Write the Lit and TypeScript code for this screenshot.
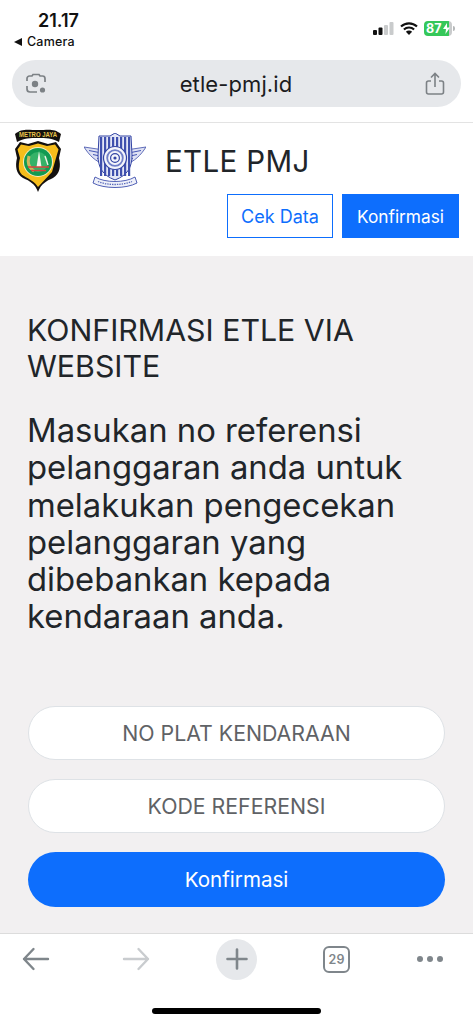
import { LitElement, html, css, svg } from "lit";
import { customElement } from "lit/decorators.js";

const polri = svg`<svg class="polri" viewBox="0 0 48 65" width="48" height="65" aria-hidden="true">
  <path d="M1 6 C 8 0, 14 2, 24 2 C 34 2, 40 0, 47 6 L 45 14 C 38 10, 32 10, 24 10 C 16 10, 10 10, 3 14 Z" fill="#14110f"/>
  <text x="24" y="8.6" text-anchor="middle" font-family="Liberation Sans, sans-serif" font-size="6.6" font-weight="700" fill="#e8c24a" textLength="38" lengthAdjust="spacingAndGlyphs">METRO JAYA</text>
  <path d="M24 13 L34 16 L42 14 L47 21 L45 30 C 47 38, 46 46, 39 50 C 32 53, 27 56, 24 64 C 21 56, 16 53, 9 50 C 2 46, 1 38, 3 30 L1 21 L6 14 L14 16 Z" fill="#14110f"/>
  <path d="M24 15.5 L33 18 L41 16.5 L44.5 21.5 L42 30 L38 44 L24 59 C 21 54, 15 51, 10 48 C 4 45, 4 38, 6 30 L3.5 21.5 L7 16.5 L15 18 Z" fill="#f6bd1b"/>
  <circle cx="24" cy="34" r="15" fill="#f5ecc4"/>
  <circle cx="24" cy="34" r="14" fill="#129a52"/>
  <circle cx="24" cy="34" r="10" fill="#35b268"/>
  <path d="M15 28 C 13 35, 15 40, 20 43" fill="none" stroke="#c9b95e" stroke-width="3"/>
  <path d="M25 23 L27.5 39 L22.5 39 Z" fill="#f7f5ee"/>
  <path d="M14 39 L35 39 M17 42.5 L32 42.5" stroke="#d8433c" stroke-width="1.7"/>
  <path d="M31 28 L34 37" stroke="#f5f3ec" stroke-width="1.3"/>
</svg>`;

const bars = [15, 19, 23, 27, 31, 35, 39, 43];
const lantas = svg`<svg class="lantas" viewBox="0 0 62 58" width="62" height="58" aria-hidden="true">
  <path d="M0 14 L20 17 L20 31 C 12 29, 5 22, 0 14 Z M62 14 L42 17 L42 31 C 50 29, 57 22, 62 14 Z" fill="#dfe2f4" stroke="#3b4ba8" stroke-width=".8"/>
  <path d="M5 17.5 L20 20.5 M9 21.5 L20 24 M13 25.5 L20 27.5 M57 17.5 L42 20.5 M53 21.5 L42 24 M49 25.5 L42 27.5" stroke="#4556b4" stroke-width="1"/>
  <path d="M31 0 L36 3 L47 3 L48 22 C 48 34, 44 42, 31 47 C 18 42, 14 34, 14 22 L15 3 L26 3 Z" fill="#e4e7f7" stroke="#3344a4" stroke-width="1"/>
  ${bars.map((x) => svg`<rect x="${x + 1}" y="4" width="2.2" height="39" fill="#3f50ae"/>`)}
  <circle cx="31" cy="25" r="11.5" fill="#f4f5fb" stroke="#3344a4" stroke-width="1.2"/>
  <circle cx="31" cy="25" r="7.8" fill="none" stroke="#6f7ec8" stroke-width="1.8"/>
  <circle cx="31" cy="25" r="4.4" fill="none" stroke="#3344a4" stroke-width="1.2"/>
  <circle cx="31" cy="25" r="1.6" fill="#3344a4"/>
  <path d="M11 44 C 21 50, 41 50, 51 44 L53 50 C 42 56, 20 56, 9 50 Z" fill="#eef0f9" stroke="#3f50ae" stroke-width=".9"/>
  <path d="M14 48.5 C 24 52.5, 38 52.5, 48 48.5" fill="none" stroke="#5a6abb" stroke-width="1.3" stroke-dasharray="1.4 1"/>
</svg>`;

@customElement("app-root")
export class AppRoot extends LitElement {
  static styles = css`
    :host { display: block; width: 473px; height: 1023px; background: #fff; overflow: hidden;
      font-family: Inter, "Liberation Sans", sans-serif; color: #212529; }
    .page { height: 1023px; display: flex; flex-direction: column; }
    .status { height: 60px; flex: none; display: flex; justify-content: space-between; padding: 0 18px 0 14px; box-sizing: border-box; }
    .left { display: flex; flex-direction: column; }
    .time { margin: 11px 0 0 24px; font-size: 18px; line-height: 20px; font-weight: 600; color: #111; }
    .back { margin-top: 3px; font-size: 12.5px; line-height: 16px; color: #111; display: flex; align-items: center; gap: 5px; font-weight: 500; letter-spacing: .2px; }
    .back i { width: 0; height: 0; border-style: solid; border-width: 4px 8px 4px 0; border-color: transparent #111 transparent transparent; }
    .indicators { display: flex; align-items: center; height: 18px; margin-top: 19px; gap: 6px; }
    .battery { width: 28px; height: 15px; border-radius: 4px; background: linear-gradient(90deg, #35c759 0 90%, #c9cbcc 90%); color: #fff; font-size: 12.5px; font-weight: 700; line-height: 15px; padding-left: 2px; box-sizing: border-box; white-space: nowrap; overflow: hidden; position: relative; }
    .bolt { position: absolute; right: 2px; top: 2px; }
    .nub { width: 2px; height: 5px; background: #b5b8b9; border-radius: 0 2px 2px 0; margin-left: -5px; }
    .urlbar { flex: none; height: 47px; margin: 0 12px; background: #e6e8eb; border-radius: 24px; display: flex; align-items: center; justify-content: space-between; padding: 0 16px 0 13px; }
    .url { font-size: 22px; color: #1b1c1e; letter-spacing: .1px; }
    .urlbar svg { display: block; }
    header { flex: none; margin-top: 15px; height: 134px; box-sizing: border-box; border-top: 1px solid #e3e3e3; display: flex; flex-direction: column; }
    .brand { display: flex; align-items: flex-start; height: 71px; }
    .polri { margin: 5px 0 0 14px; display: block; }
    .lantas { margin: 10px 0 0 22px; display: block; }
    .brand h1 { margin: 20px 0 0 19px; font-size: 29.5px; line-height: 36px; font-weight: 400; color: #212529; letter-spacing: .35px; }
    .actions { display: flex; justify-content: flex-end; gap: 9px; padding-right: 14px; }
    .btn { height: 44px; box-sizing: border-box; display: flex; align-items: center; justify-content: center; border: 1px solid #0d6efd; }
    .outline { width: 106px; color: #0d6efd; background: #fff; font-size: 18px; }
    .solid { width: 117px; color: #fff; background: #0d6efd; font-size: 17.3px; }
    main { flex: 1; background: #f2f0f1; padding: 56px 28px 0; display: flex; flex-direction: column; min-height: 0; }
    h2 { margin: 0 0 0 -1px; font-size: 30.3px; line-height: 36px; font-weight: 400; color: #212529; }
    .lead { margin: 28px 0 0 -1px; font-size: 32.8px; line-height: 37.3px; font-weight: 400; color: #212529; }
    .form { margin-top: 70px; display: flex; flex-direction: column; gap: 19px; }
    .field { height: 54px; box-sizing: border-box; border-radius: 27px; background: #fff; border: 1px solid #dee2e6; display: flex; align-items: center; justify-content: center; font-size: 21.3px; color: #5f6266; }
    .submit { height: 55px; border-radius: 28px; background: #0d6efd; color: #fff; display: flex; align-items: center; justify-content: center; font-size: 20.6px; }
    .toolbar { flex: none; height: 90px; border-top: 1px solid #dcdcdc; box-sizing: border-box; display: flex; flex-direction: column; align-items: center; }
    .tools { width: 100%; box-sizing: border-box; padding-left: 22px; display: flex; gap: 66px; align-items: center; height: 50px; }
    .back-arrow { margin-right: 6px; }
    .plus { width: 41px; height: 41px; border-radius: 50%; background: #e6e8eb; display: flex; align-items: center; justify-content: center; }
    .tabs { width: 27px; height: 27px; box-sizing: border-box; border: 2px solid #7f868b; border-radius: 6px; font-size: 12.5px; font-weight: 600; color: #7f868b; display: flex; align-items: center; justify-content: center; }
    .home { width: 169px; height: 6px; background: #000; border-radius: 3px; margin-top: 24px; }
  `;

  render() {
    return html`<div class="page">
      <div class="status">
        <div class="left">
          <div class="time">21.17</div>
          <div class="back"><i></i>Camera</div>
        </div>
        <div class="indicators">
          <svg width="21" height="13" viewBox="0 0 21 13" aria-hidden="true"><rect x="0" y="8" width="4" height="5" rx="1" fill="#111"/><rect x="5.5" y="5.5" width="4" height="7.5" rx="1" fill="#111"/><rect x="11" y="3" width="4" height="10" rx="1" fill="#c9cbcc"/><rect x="16.5" y="0" width="4" height="13" rx="1" fill="#c9cbcc"/></svg>
          <svg width="18" height="13" viewBox="0 0 18 13" aria-hidden="true"><path d="M1 4.6 A11.5 11.5 0 0 1 17 4.6 M3.9 7.5 A7.4 7.4 0 0 1 14.1 7.5" fill="none" stroke="#111" stroke-width="2.1"/><path d="M9 13 L5.9 9.8 A4.4 4.4 0 0 1 12.1 9.8 Z" fill="#111"/></svg>
          <div class="battery">87<svg class="bolt" width="7" height="11" viewBox="0 0 7 11" aria-hidden="true"><path d="M4 0 L0 6 H3 L2.4 11 L7 4.6 H4 Z" fill="#fff"/></svg></div>
          <div class="nub"></div>
        </div>
      </div>
      <div class="urlbar">
        <svg width="22" height="22" viewBox="0 0 22 22" fill="none" stroke="#7c8185" stroke-width="1.7" aria-hidden="true"><path d="M2 8 V5.5 A2.5 2.5 0 0 1 4.5 3 H7 L8 1.5 H14 L15 3 H17.5 A2.5 2.5 0 0 1 20 5.5 V9 M2 13 V16 A3 3 0 0 0 5 19 H12"/><circle cx="10" cy="11" r="3.2" fill="#7c8185" stroke="none"/><circle cx="17.5" cy="17" r="2.6" fill="#7c8185" stroke="none"/></svg>
        <span class="url">etle-pmj.id</span>
        <svg width="20" height="24" viewBox="0 0 20 24" fill="none" stroke="#7c8185" stroke-width="1.6" aria-hidden="true"><path d="M6 9 H3.5 A2 2 0 0 0 1.5 11 V20 A2 2 0 0 0 3.5 22 H16.5 A2 2 0 0 0 18.5 20 V11 A2 2 0 0 0 16.5 9 H14 M10 15 V2 M6 5.5 L10 1.5 L14 5.5"/></svg>
      </div>
      <header>
        <div class="brand">${polri}${lantas}<h1>ETLE PMJ</h1></div>
        <div class="actions"><div class="btn outline">Cek Data</div><div class="btn solid">Konfirmasi</div></div>
      </header>
      <main>
        <h2>KONFIRMASI ETLE VIA WEBSITE</h2>
        <p class="lead">Masukan no referensi pelanggaran anda untuk melakukan pengecekan pelanggaran yang dibebankan kepada kendaraan anda.</p>
        <div class="form">
          <div class="field">NO PLAT KENDARAAN</div>
          <div class="field">KODE REFERENSI</div>
          <div class="submit">Konfirmasi</div>
        </div>
      </main>
      <div class="toolbar">
        <div class="tools">
          <svg class="back-arrow" width="28" height="24" viewBox="0 0 28 24" fill="none" stroke="#7f868b" stroke-width="2.4" stroke-linecap="round" stroke-linejoin="round" aria-hidden="true"><path d="M26 12 H2 M11.5 2 L2 12 L11.5 22"/></svg>
          <svg width="28" height="24" viewBox="0 0 28 24" fill="none" stroke="#c9cccf" stroke-width="2.4" stroke-linecap="round" stroke-linejoin="round" aria-hidden="true"><path d="M2 12 H26 M16.5 2 L26 12 L16.5 22"/></svg>
          <div class="plus"><svg width="22" height="22" viewBox="0 0 22 22" fill="none" stroke="#7f868b" stroke-width="2.6" stroke-linecap="round" aria-hidden="true"><path d="M11 1.5 V20.5 M1.5 11 H20.5"/></svg></div>
          <div class="tabs">29</div>
          <svg width="28" height="8" viewBox="0 0 28 8" fill="#7f868b" aria-hidden="true"><circle cx="4" cy="4" r="3"/><circle cx="14" cy="4" r="3"/><circle cx="24" cy="4" r="3"/></svg>
        </div>
        <div class="home"></div>
      </div>
    </div>`;
  }
}
